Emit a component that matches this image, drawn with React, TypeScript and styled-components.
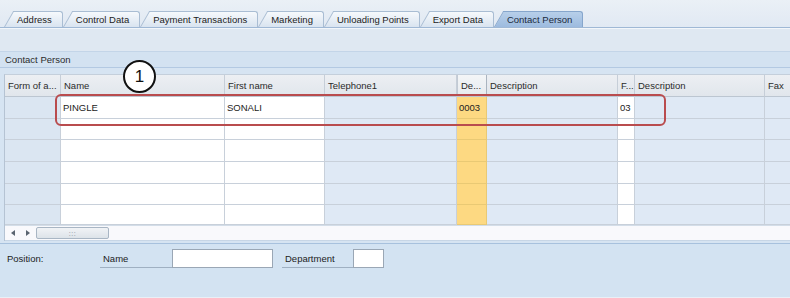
import styled, { createGlobalStyle } from 'styled-components';

const GlobalStyle = createGlobalStyle`
  html, body {
    margin: 0;
    padding: 0;
    background: #dfe8f2;
  }
  body {
    font-family: "Liberation Sans", Arial, sans-serif;
  }
`;

const Page = styled.div`
  width: 790px;
  height: 298px;
  overflow: hidden;
  background: #dfe8f2;
  font-family: "Liberation Sans", Arial, sans-serif;
  font-size: 9.5px;
  color: #222;
`;

const TabStrip = styled.div`
  height: 27px;
  display: flex;
  align-items: flex-end;
  padding-left: 4px;
  background: linear-gradient(#eaf0f6, #e1e9f3);
  border-bottom: 1px solid #9fb8d5;
  box-shadow: 0 1px 0 #f2f6fa;
`;

const Tab = styled.div<{ $active?: boolean }>`
  position: relative;
  z-index: ${(p) => (p.$active ? 2 : 1)};
  height: 16px;
  line-height: 17px;
  padding: 0 11px 0 13px;
  white-space: nowrap;
  color: ${(p) => (p.$active ? '#1b2a3c' : '#222')};

  &::before,
  &::after {
    content: '';
    position: absolute;
    top: 0;
    bottom: 0;
    z-index: -1;
    background: ${(p) =>
      p.$active
        ? 'linear-gradient(#b7cfe9, #9dbbdf)'
        : 'linear-gradient(#f6f9fc, #d9e4f0)'};
    border-top: 1px solid ${(p) => (p.$active ? '#86a6cc' : '#a9bdd3')};
  }

  &::before {
    left: 0;
    width: 20px;
    transform: skewX(-30deg);
    transform-origin: bottom left;
    border-left: 1px solid ${(p) => (p.$active ? '#86a6cc' : '#a9bdd3')};
  }

  &::after {
    left: 10px;
    right: 0;
    border-right: 1px solid ${(p) => (p.$active ? '#86a6cc' : '#a9bdd3')};
    border-top-right-radius: 3px;
  }
`;

const Spacer = styled.div`
  height: 23px;
`;

const Group = styled.div`
  border-top: 1px solid #c3d5e8;
  border-bottom: 1px solid #a7c1dd;
  background: #d6e4f2;
`;

const GroupTitle = styled.div`
  height: 15px;
  line-height: 15px;
  padding-left: 5px;
  background: #d3e2f1;
  border-bottom: 1px solid #b3c9e2;
  color: #2b2b2b;
`;

const GroupBody = styled.div`
  padding: 6px 0 2px 4px;
`;

const TableWrap = styled.div`
  position: relative;
  border-left: 1px solid #b5c3d3;
  border-top: 1px solid #c4cfdb;
`;

const Grid = styled.div`
  display: grid;
  grid-template-columns: 56px 164px 100px 132px 30px 131px 17px 130px 40px;
  grid-template-rows: 22px 22px 21px 22px 22px 21px 20px;
  width: 785px;
  overflow: hidden;
`;

type Kind = 'rowhead' | 'edit' | 'ro' | 'key';

const cellBg: Record<Kind, string> = {
  rowhead: '#dbe6f2',
  edit: '#ffffff',
  ro: '#dfe9f5',
  key: '#fdd982',
};

const HeadCell = styled.div<{ $sel?: boolean }>`
  display: flex;
  align-items: center;
  padding-left: 3px;
  white-space: nowrap;
  overflow: hidden;
  color: #2a2a2a;
  background: ${(p) =>
    p.$sel ? 'linear-gradient(#f3f5f7, #e7ebef)' : 'linear-gradient(#eceff3, #e1e6ec)'};
  border-right: 1px solid ${(p) => (p.$sel ? '#aab4bf' : '#c6ced8')};
  border-left: ${(p) => (p.$sel ? '1px solid #c2cad4' : 'none')};
  border-bottom: 1px solid #bcc6d1;
`;

const Cell = styled.div<{ $kind: Kind }>`
  display: flex;
  align-items: center;
  padding-left: 2px;
  white-space: nowrap;
  overflow: hidden;
  background: ${(p) => cellBg[p.$kind]};
  border-right: 1px solid ${(p) => (p.$kind === 'key' ? '#e9c974' : '#c8d0da')};
  border-bottom: 1px solid ${(p) => (p.$kind === 'key' ? '#e9c974' : '#c8d0da')};
  color: #222;
`;

const Scrollbar = styled.div`
  height: 14px;
  display: flex;
  align-items: center;
  padding-left: 6px;
  background: #f9f9fc;
  border-top: 1px solid #d3dde8;
  border-bottom: 1px solid #c7d6e6;
`;

const Arrow = styled.span<{ $dir: 'left' | 'right' }>`
  width: 0;
  height: 0;
  border-top: 3.5px solid transparent;
  border-bottom: 3.5px solid transparent;
  ${(p) =>
    p.$dir === 'left'
      ? 'border-right: 4px solid #5a6470;'
      : 'border-left: 4px solid #5a6470;'}
  margin-right: ${(p) => (p.$dir === 'left' ? '11px' : '6px')};
`;

const Thumb = styled.div`
  width: 71px;
  height: 10px;
  display: flex;
  align-items: center;
  justify-content: center;
  border: 1px solid #a9b6c4;
  border-radius: 2px;
  background: linear-gradient(#f1f3f6, #dde3e9);
  color: #7d8894;
  font-size: 7px;
  line-height: 7px;
  letter-spacing: 0.5px;
`;

const Highlight = styled.div`
  position: absolute;
  left: 50px;
  top: 19px;
  width: 607px;
  height: 28px;
  border: 2px solid #b94c4e;
  border-radius: 6px;
  pointer-events: none;
`;

const Callout = styled.div`
  position: absolute;
  left: 118px;
  top: -15px;
  width: 29px;
  height: 29px;
  border: 2px solid #111;
  border-radius: 50%;
  background: #fff;
  display: flex;
  align-items: center;
  justify-content: center;
  font-family: "Liberation Sans", Arial, sans-serif;
  font-size: 17px;
  color: #111;
`;

const PositionBar = styled.div`
  height: 48px;
  display: flex;
  align-items: flex-start;
  padding: 5px 0 0 7px;
  background: #d3e3f2;
  border-bottom: 1px solid #e9f0f7;
`;

const Caption = styled.div`
  width: 93px;
  height: 20px;
  line-height: 20px;
`;

const Label = styled.div<{ $w: number }>`
  width: ${(p) => p.$w}px;
  height: 19px;
  line-height: 20px;
  padding-left: 3px;
  box-sizing: border-box;
  border-bottom: 1px solid #9fb0c2;
`;

const Input = styled.div<{ $w: number }>`
  width: ${(p) => p.$w}px;
  height: 19px;
  box-sizing: border-box;
  background: #fff;
  border: 1px solid #9aa7b5;
  margin-right: 9px;
`;

const Footer = styled.div`
  height: 8px;
  background: #dde8f3;
`;

const tabs = [
  'Address',
  'Control Data',
  'Payment Transactions',
  'Marketing',
  'Unloading Points',
  'Export Data',
  'Contact Person',
];

const columns: { title: string; kind: Kind; sel?: boolean }[] = [
  { title: 'Form of a...', kind: 'rowhead' },
  { title: 'Name', kind: 'edit' },
  { title: 'First name', kind: 'edit' },
  { title: 'Telephone1', kind: 'ro' },
  { title: 'De...', kind: 'key', sel: true },
  { title: 'Description', kind: 'ro' },
  { title: 'F...', kind: 'edit' },
  { title: 'Description', kind: 'ro' },
  { title: 'Fax', kind: 'ro' },
];

const rows: string[][] = [
  ['', 'PINGLE', 'SONALI', '', '0003', '', '03', '', ''],
  ['', '', '', '', '', '', '', '', ''],
  ['', '', '', '', '', '', '', '', ''],
  ['', '', '', '', '', '', '', '', ''],
  ['', '', '', '', '', '', '', '', ''],
  ['', '', '', '', '', '', '', '', ''],
];

export default function App() {
  return (
    <Page>
      <GlobalStyle />
      <TabStrip>
        {tabs.map((t) => (
          <Tab key={t} $active={t === 'Contact Person'}>
            {t}
          </Tab>
        ))}
      </TabStrip>
      <Spacer />
      <Group>
        <GroupTitle>Contact Person</GroupTitle>
        <GroupBody>
          <TableWrap>
            <Grid>
              {columns.map((c, i) => (
                <HeadCell key={'h' + i} $sel={c.sel}>
                  {c.title}
                </HeadCell>
              ))}
              {rows.map((r, ri) =>
                r.map((v, ci) => (
                  <Cell key={ri + '-' + ci} $kind={columns[ci].kind}>
                    {v}
                  </Cell>
                )),
              )}
            </Grid>
            <Scrollbar>
              <Arrow $dir="left" />
              <Arrow $dir="right" />
              <Thumb>:::</Thumb>
            </Scrollbar>
            <Highlight />
            <Callout>1</Callout>
          </TableWrap>
        </GroupBody>
      </Group>
      <PositionBar>
        <Caption>Position:</Caption>
        <Label $w={72}>Name</Label>
        <Input $w={101} />
        <Label $w={71}>Department</Label>
        <Input $w={31} />
      </PositionBar>
      <Footer />
    </Page>
  );
}
